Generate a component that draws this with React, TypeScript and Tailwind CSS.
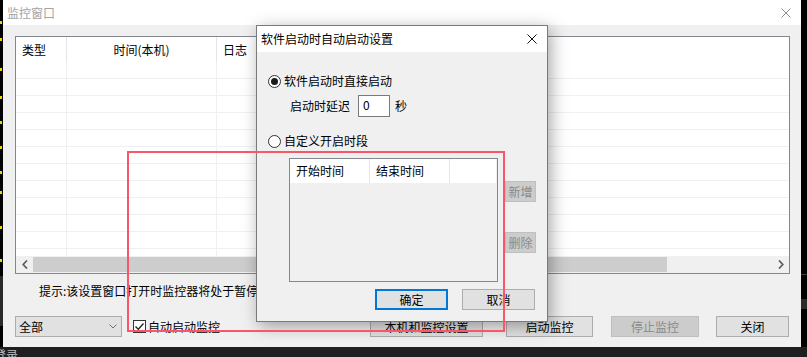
import React from "react";

const FONT = "font-['Noto_Sans_CJK_SC','Noto_Sans',sans-serif]";

function CloseX({ color, size = 10 }: { color: string; size?: number }) {
  return (
    <svg width={size} height={size} viewBox="0 0 10 10">
      <path d="M0.5 0.5 L9.5 9.5 M9.5 0.5 L0.5 9.5" stroke={color} strokeWidth="1" fill="none" />
    </svg>
  );
}

function Radio({ checked }: { checked?: boolean }) {
  return (
    <div className="w-[13px] h-[13px] rounded-full border border-[#333333] bg-white flex items-center justify-center shrink-0">
      {checked && <div className="w-[7px] h-[7px] rounded-full bg-[#1a1a1a]" />}
    </div>
  );
}

function Btn({
  children,
  w,
  className = "",
  disabled,
  primary,
}: {
  children: React.ReactNode;
  w: string;
  className?: string;
  disabled?: boolean;
  primary?: boolean;
}) {
  const base = disabled
    ? "bg-[#cccccc] border border-[#bfbfbf] text-[#8a8a8a]"
    : primary
    ? "bg-[#e1e1e1] border-2 border-[#0078d7] text-black"
    : "bg-[#e1e1e1] border border-[#adadad] text-black";
  return (
    <div className={`${w} h-[21px] ${base} flex items-center justify-center text-[12px] leading-none shrink-0 ${className}`}>
      {children}
    </div>
  );
}

export default function App() {
  const rows = Array.from({ length: 12 });
  const yellowMarks = [21, 14, 27, 25, 22, 22, 22, 17, 32, 30];
  return (
    <div className={`w-[807px] h-[357px] bg-black flex flex-col overflow-hidden relative ${FONT}`}>
      <div className="flex h-[347px]">
        {/* left desktop strip */}
        <div className="w-[3px] flex flex-col">
          {yellowMarks.map((m, i) => (
            <div key={i} className="w-[2px] h-[3px] bg-[#e6d800]" style={{ marginTop: m }} />
          ))}
          <div className="mt-[14px] w-[3px] h-[50px] bg-[#2a2a2a]" />
        </div>

        {/* main window */}
        <div className="w-[798px] flex flex-col bg-[#f0f0f0]">
          <div className="h-[25px] bg-white flex items-center justify-between pl-[4px] pr-[10px]">
            <span className="text-[12px] text-[#a3a3a3] leading-none">监控窗口</span>
            <CloseX color="#8c8c8c" />
          </div>
          <div className="flex-1 flex flex-col px-[12px] pt-[11px]">
            {/* list */}
            <div className="h-[238px] w-[775px] border border-[#828790] bg-white flex flex-col">
              <div className="h-[25px] flex text-[12px] text-black shrink-0">
                <div className="w-[51px] border-r border-[#e5e5e5] flex items-center pl-[6px]">类型</div>
                <div className="w-[150px] border-r border-[#e5e5e5] flex items-center justify-center">时间(本机)</div>
                <div className="flex-1 flex items-center pl-[6px]">日志</div>
              </div>
              <div className="flex-1 overflow-hidden">
                {rows.map((_, i) => (
                  <div key={i} className="h-[17px] flex border-b border-[#f0f0f0]">
                    <div className="w-[51px] border-r border-[#f0f0f0]" />
                    <div className="w-[150px] border-r border-[#f0f0f0]" />
                    <div className="flex-1" />
                  </div>
                ))}
              </div>
              <div className="h-[17px] bg-[#f0f0f0] flex shrink-0">
                <div className="w-[17px] flex items-center justify-center">
                  <svg width="6" height="9" viewBox="0 0 6 9">
                    <path d="M5 0.5 L1.2 4.5 L5 8.5" stroke="#606060" strokeWidth="1.8" fill="none" />
                  </svg>
                </div>
                <div className="flex-1 flex items-center">
                  <div className="w-[634px] h-[15px] bg-[#cdcdcd]" />
                </div>
                <div className="w-[17px] flex items-center justify-center">
                  <svg width="6" height="9" viewBox="0 0 6 9">
                    <path d="M1 0.5 L4.8 4.5 L1 8.5" stroke="#606060" strokeWidth="1.8" fill="none" />
                  </svg>
                </div>
              </div>
            </div>

            {/* hint */}
            <div className="h-[34px] flex items-center pl-[24px] text-[12px] text-black whitespace-nowrap">
              提示:该设置窗口打开时监控器将处于暂停状态
            </div>

            {/* bottom row */}
            <div className="mt-[8px] h-[21px] flex items-center">
              <div className="w-[107px] h-[21px] bg-[#e1e1e1] border border-[#adadad] flex items-center justify-between pl-[3px] pr-[4px] text-[12px] text-black">
                <span>全部</span>
                <svg width="8" height="5" viewBox="0 0 8 5">
                  <path d="M0.5 0.5 L4 4 L7.5 0.5" stroke="#707070" strokeWidth="1" fill="none" />
                </svg>
              </div>
              <div className="ml-[11px] w-[237px] flex items-center gap-[2px]">
                <div className="w-[13px] h-[13px] bg-white border border-[#333333] flex items-center justify-center">
                  <svg width="11" height="11" viewBox="0 0 11 11">
                    <path d="M1.5 5.5 L4.3 8.3 L9.5 2.5" stroke="#222222" strokeWidth="1.3" fill="none" />
                  </svg>
                </div>
                <span className="text-[12px] text-black leading-none">自动启动监控</span>
              </div>
              <Btn w="w-[113px]">本机和监控设置</Btn>
              <Btn w="w-[87px]" className="ml-[23px]">启动监控</Btn>
              <Btn w="w-[88px]" className="ml-[18px]" disabled>停止监控</Btn>
              <Btn w="w-[73px]" className="ml-[17px]">关闭</Btn>
            </div>
          </div>
        </div>

        {/* right desktop strip */}
        <div className="flex-1 flex flex-col">
          <div className="mt-[274px] h-[1px] bg-[#3a3a3a]" />
          <div className="mt-[24px] h-[10px] bg-[#2a2a2a]" />
        </div>
      </div>

      {/* bottom desktop strip */}
      <div className="h-[10px] bg-[#1f1f1f] overflow-hidden">
        <div className="text-[12px] leading-[14px] text-[#bdbdbd] -ml-[6px] mt-[1px]">登录</div>
      </div>

      {/* dialog */}
      <div className="absolute left-[256px] top-[25px] w-[292px] h-[297px] border border-[#7a7a7a] bg-[#f0f0f0] flex flex-col shadow-[3px_4px_16px_rgba(0,0,0,0.35)]">
        <div className="h-[26px] bg-white flex items-center justify-between pl-[4px] pr-[10px] shrink-0">
          <span className="text-[12px] text-black leading-none">软件启动时自动启动设置</span>
          <CloseX color="#111111" />
        </div>
        <div className="flex-1 flex flex-col text-[12px] text-black">
          <div className="mt-[21px] h-[16px] flex items-center pl-[11px] gap-[3px]">
            <Radio checked />
            <span className="leading-none">软件启动时直接启动</span>
          </div>
          <div className="mt-[6px] h-[22px] flex items-center pl-[33px]">
            <span className="w-[68px] leading-none">启动时延迟</span>
            <div className="w-[32px] h-[22px] bg-white border border-[#7a7a7a] pl-[4px] pt-[2px] text-[12px] leading-[14px]">0</div>
            <span className="ml-[5px] leading-none">秒</span>
          </div>
          <div className="mt-[16px] h-[16px] flex items-center pl-[11px] gap-[3px]">
            <Radio />
            <span className="leading-none">自定义开启时段</span>
          </div>
          <div className="mt-[9px] flex pl-[32px]">
            <div className="w-[209px] h-[124px] border border-[#828790] bg-[#f0f0f0] flex flex-col">
              <div className="h-[24px] bg-white flex mr-[1px]">
                <div className="w-[80px] border-r border-[#e5e5e5] flex items-center pl-[6px]">开始时间</div>
                <div className="w-[80px] border-r border-[#e5e5e5] flex items-center pl-[6px]">结束时间</div>
                <div className="flex-1" />
              </div>
            </div>
            <div className="ml-[7px] flex flex-col">
              <Btn w="w-[31px]" className="mt-[23px]" disabled>新增</Btn>
              <Btn w="w-[31px]" className="mt-[30px]" disabled>删除</Btn>
            </div>
          </div>
          <div className="mt-[7px] flex pl-[118px] gap-[14px]">
            <Btn w="w-[73px]" primary>确定</Btn>
            <Btn w="w-[73px]">取消</Btn>
          </div>
        </div>
      </div>

      {/* red annotation rectangle */}
      <div className="absolute left-[127px] top-[151px] w-[378px] h-[181px] border-2 border-[#f9566a] pointer-events-none" />
    </div>
  );
}
